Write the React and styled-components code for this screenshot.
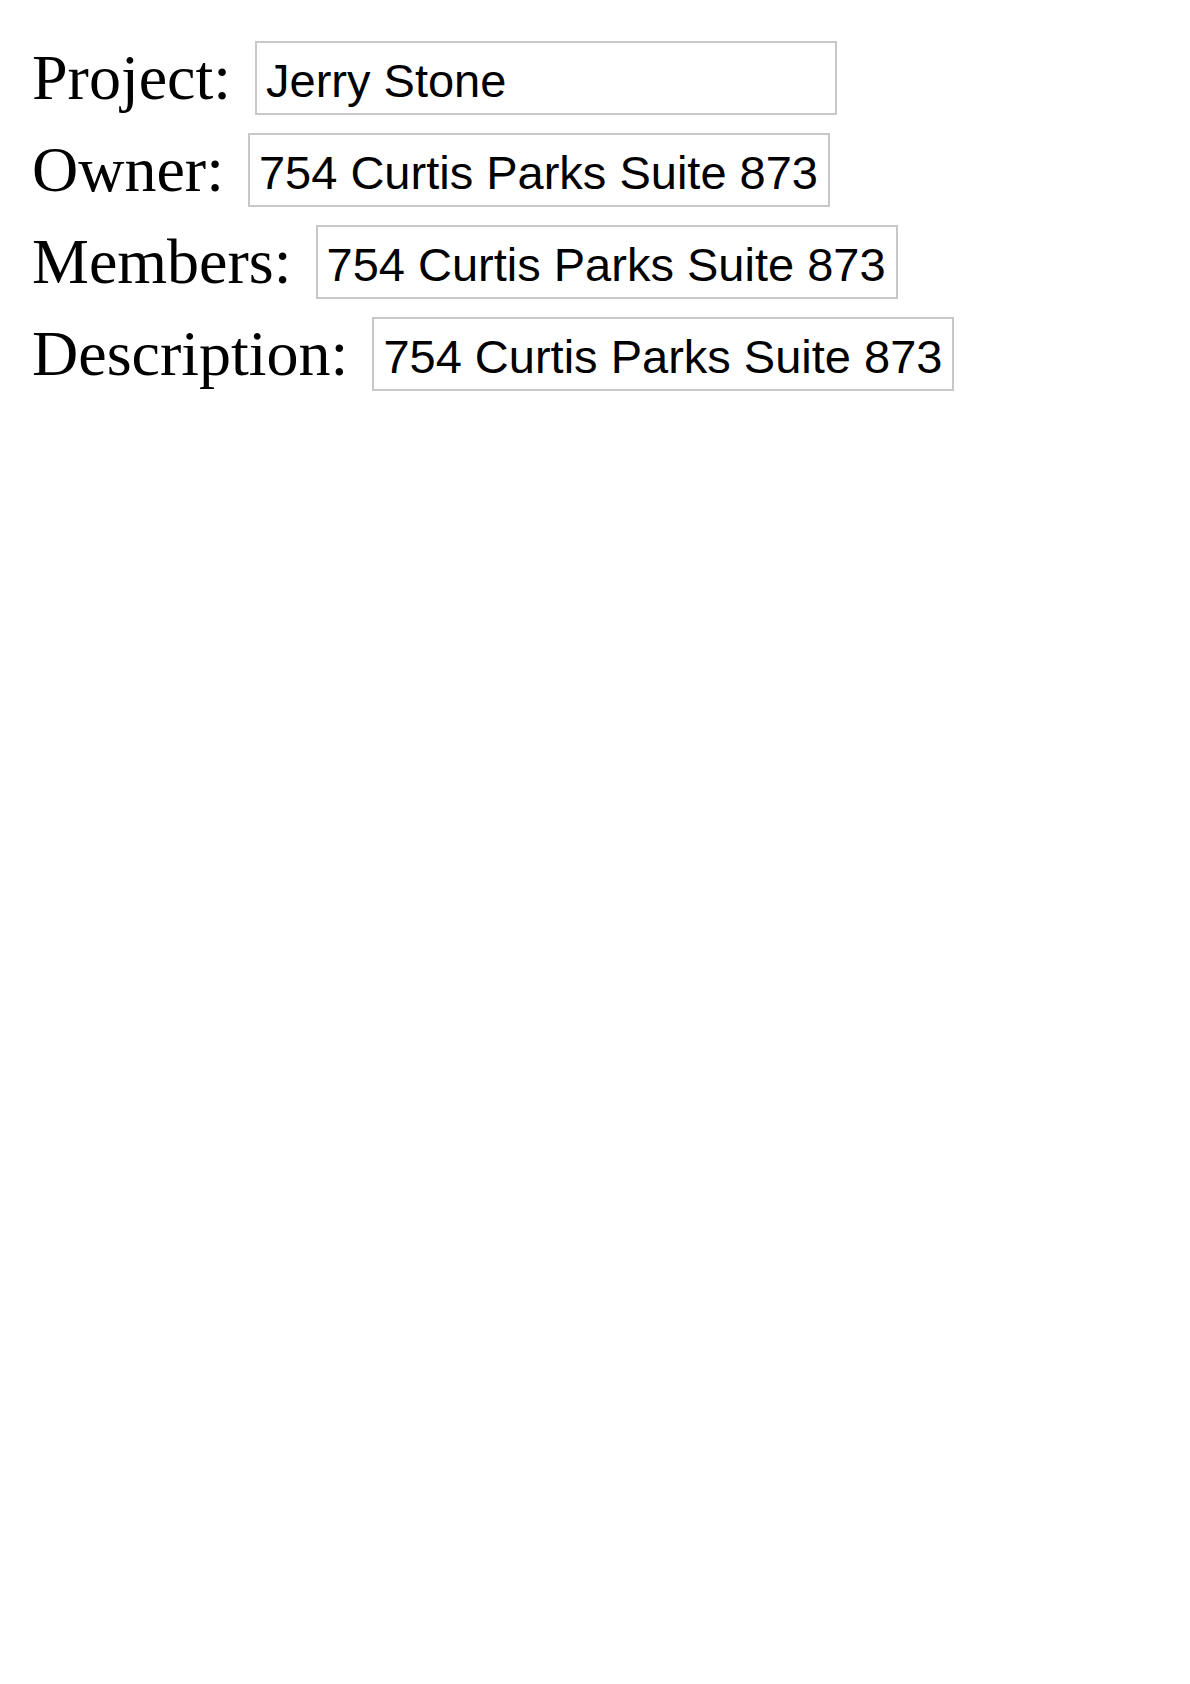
import styled, { createGlobalStyle } from "styled-components";

const GlobalStyle = createGlobalStyle`
  html, body {
    margin: 0;
    padding: 0;
    background: #ffffff;
  }
`;

const Form = styled.form`
  display: flex;
  flex-direction: column;
  gap: 18px;
  padding: 41px 0 0 32px;
`;

const Row = styled.div`
  display: flex;
  align-items: center;
  gap: 24px;
`;

const Label = styled.label`
  font-family: "Liberation Serif", "Times New Roman", serif;
  font-size: 64px;
  line-height: 74px;
  color: #000;
  white-space: nowrap;
`;

const Field = styled.input`
  box-sizing: border-box;
  width: 582px;
  height: 74px;
  padding: 4px 2px 0 9px;
  border: 2px solid #c8c8c8;
  border-radius: 0;
  outline: none;
  background: #fff;
  font-family: "Liberation Sans", Arial, sans-serif;
  font-size: 47px;
  color: #000;
`;

const fields = [
  { label: "Project:", value: "Jerry Stone" },
  { label: "Owner:", value: "754 Curtis Parks Suite 873" },
  { label: "Members:", value: "754 Curtis Parks Suite 873" },
  { label: "Description:", value: "754 Curtis Parks Suite 873" },
];

export default function App() {
  return (
    <>
      <GlobalStyle />
      <Form onSubmit={(e) => e.preventDefault()}>
        {fields.map((f) => (
          <Row key={f.label}>
            <Label>{f.label}</Label>
            <Field type="text" value={f.value} readOnly />
          </Row>
        ))}
      </Form>
    </>
  );
}
